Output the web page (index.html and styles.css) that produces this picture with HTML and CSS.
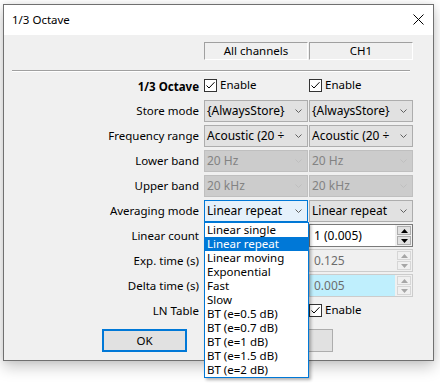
FILE: index.html
```html
<!DOCTYPE html>
<html>
<head>
<meta charset="utf-8">
<title>1/3 Octave</title>
<link rel="stylesheet" href="styles.css">
</head>
<body>
<div class="win">
  <div class="titlebar">
    <span class="title">1/3 Octave</span>
    <svg class="close" width="11" height="11" viewBox="0 0 11 11"><path d="M0.5 0.5L10.5 10.5M10.5 0.5L0.5 10.5" stroke="#000" stroke-width="1"/></svg>
  </div>
  <div class="client">
    <div class="row head">
      <span></span>
      <div class="hcell">All channels</div>
      <div class="hcell">CH1</div>
    </div>
    <div class="sep"></div>

    <div class="row">
      <span class="label bold">1/3 Octave</span>
      <label class="check"><svg class="cb" width="13" height="13" viewBox="0 0 13 13"><rect x="0.5" y="0.5" width="12" height="12" fill="#fff" stroke="#333"/><path d="M2.5 6.5L5 9L10.5 3.2" fill="none" stroke="#000"/></svg>Enable</label>
      <label class="check"><svg class="cb" width="13" height="13" viewBox="0 0 13 13"><rect x="0.5" y="0.5" width="12" height="12" fill="#fff" stroke="#333"/><path d="M2.5 6.5L5 9L10.5 3.2" fill="none" stroke="#000"/></svg>Enable</label>
    </div>

    <div class="row">
      <span class="label">Store mode</span>
      <div class="combo"><span class="ctext">{AlwaysStore}</span><span class="arrow"><svg width="7" height="4" viewBox="0 0 7 4"><path d="M0.5 0.5L3.5 3.5L6.5 0.5" fill="none" stroke="#606060"/></svg></span></div>
      <div class="combo"><span class="ctext">{AlwaysStore}</span><span class="arrow"><svg width="7" height="4" viewBox="0 0 7 4"><path d="M0.5 0.5L3.5 3.5L6.5 0.5" fill="none" stroke="#606060"/></svg></span></div>
    </div>

    <div class="row">
      <span class="label">Frequency range</span>
      <div class="combo"><span class="ctext">Acoustic (20 ÷ 20000 Hz)</span><span class="arrow"><svg width="7" height="4" viewBox="0 0 7 4"><path d="M0.5 0.5L3.5 3.5L6.5 0.5" fill="none" stroke="#606060"/></svg></span></div>
      <div class="combo"><span class="ctext">Acoustic (20 ÷ 20000 Hz)</span><span class="arrow"><svg width="7" height="4" viewBox="0 0 7 4"><path d="M0.5 0.5L3.5 3.5L6.5 0.5" fill="none" stroke="#606060"/></svg></span></div>
    </div>

    <div class="row">
      <span class="label">Lower band</span>
      <div class="combo disabled"><span class="ctext">20 Hz</span><span class="arrow"><svg width="7" height="4" viewBox="0 0 7 4"><path d="M0.5 0.5L3.5 3.5L6.5 0.5" fill="none" stroke="#bfbfbf"/></svg></span></div>
      <div class="combo disabled"><span class="ctext">20 Hz</span><span class="arrow"><svg width="7" height="4" viewBox="0 0 7 4"><path d="M0.5 0.5L3.5 3.5L6.5 0.5" fill="none" stroke="#bfbfbf"/></svg></span></div>
    </div>

    <div class="row">
      <span class="label">Upper band</span>
      <div class="combo disabled"><span class="ctext">20 kHz</span><span class="arrow"><svg width="7" height="4" viewBox="0 0 7 4"><path d="M0.5 0.5L3.5 3.5L6.5 0.5" fill="none" stroke="#bfbfbf"/></svg></span></div>
      <div class="combo disabled"><span class="ctext">20 kHz</span><span class="arrow"><svg width="7" height="4" viewBox="0 0 7 4"><path d="M0.5 0.5L3.5 3.5L6.5 0.5" fill="none" stroke="#bfbfbf"/></svg></span></div>
    </div>

    <div class="row">
      <span class="label">Averaging mode</span>
      <div class="combo active"><span class="ctext">Linear repeat</span><span class="arrow"><svg width="7" height="4" viewBox="0 0 7 4"><path d="M0.5 0.5L3.5 3.5L6.5 0.5" fill="none" stroke="#606060"/></svg></span></div>
      <div class="combo"><span class="ctext">Linear repeat</span><span class="arrow"><svg width="7" height="4" viewBox="0 0 7 4"><path d="M0.5 0.5L3.5 3.5L6.5 0.5" fill="none" stroke="#606060"/></svg></span></div>
    </div>

    <div class="row">
      <span class="label">Linear count</span>
      <div class="spin"><span class="stext">1 (0.005)</span><span class="sbtns"><span class="sbtn"><svg width="7" height="4" viewBox="0 0 7 4"><path d="M0 4H7L3.5 0Z" fill="#000"/></svg></span><span class="sbtn"><svg width="7" height="4" viewBox="0 0 7 4"><path d="M0 0H7L3.5 4Z" fill="#000"/></svg></span></span></div>
      <div class="spin"><span class="stext">1 (0.005)</span><span class="sbtns"><span class="sbtn"><svg width="7" height="4" viewBox="0 0 7 4"><path d="M0 4H7L3.5 0Z" fill="#000"/></svg></span><span class="sbtn"><svg width="7" height="4" viewBox="0 0 7 4"><path d="M0 0H7L3.5 4Z" fill="#000"/></svg></span></span></div>
    </div>

    <div class="row">
      <span class="label">Exp. time (s)</span>
      <div class="spin disabled"><span class="stext">0.125</span><span class="sbtns"><span class="sbtn"><svg width="7" height="4" viewBox="0 0 7 4"><path d="M0 4H7L3.5 0Z" fill="#a6a6a6"/></svg></span><span class="sbtn"><svg width="7" height="4" viewBox="0 0 7 4"><path d="M0 0H7L3.5 4Z" fill="#a6a6a6"/></svg></span></span></div>
      <div class="spin disabled"><span class="stext">0.125</span><span class="sbtns"><span class="sbtn"><svg width="7" height="4" viewBox="0 0 7 4"><path d="M0 4H7L3.5 0Z" fill="#a6a6a6"/></svg></span><span class="sbtn"><svg width="7" height="4" viewBox="0 0 7 4"><path d="M0 0H7L3.5 4Z" fill="#a6a6a6"/></svg></span></span></div>
    </div>

    <div class="row">
      <span class="label">Delta time (s)</span>
      <div class="spin disabled cyan"><span class="stext">0.005</span><span class="sbtns"><span class="sbtn"><svg width="7" height="4" viewBox="0 0 7 4"><path d="M0 4H7L3.5 0Z" fill="#a6a6a6"/></svg></span><span class="sbtn"><svg width="7" height="4" viewBox="0 0 7 4"><path d="M0 0H7L3.5 4Z" fill="#a6a6a6"/></svg></span></span></div>
      <div class="spin disabled cyan"><span class="stext">0.005</span><span class="sbtns"><span class="sbtn"><svg width="7" height="4" viewBox="0 0 7 4"><path d="M0 4H7L3.5 0Z" fill="#a6a6a6"/></svg></span><span class="sbtn"><svg width="7" height="4" viewBox="0 0 7 4"><path d="M0 0H7L3.5 4Z" fill="#a6a6a6"/></svg></span></span></div>
    </div>

    <div class="row">
      <span class="label">LN Table</span>
      <label class="check"><svg class="cb" width="13" height="13" viewBox="0 0 13 13"><rect x="0.5" y="0.5" width="12" height="12" fill="#fff" stroke="#333"/><path d="M2.5 6.5L5 9L10.5 3.2" fill="none" stroke="#000"/></svg>Enable</label>
      <label class="check"><svg class="cb" width="13" height="13" viewBox="0 0 13 13"><rect x="0.5" y="0.5" width="12" height="12" fill="#fff" stroke="#333"/><path d="M2.5 6.5L5 9L10.5 3.2" fill="none" stroke="#000"/></svg>Enable</label>
    </div>

    <div class="buttons">
      <button class="btn default">OK</button>
      <button class="btn">Cancel</button>
    </div>
  </div>
</div>

<ul class="dropdown">
  <li>Linear single</li>
  <li class="sel">Linear repeat</li>
  <li>Linear moving</li>
  <li>Exponential</li>
  <li>Fast</li>
  <li>Slow</li>
  <li>BT (e=0.5 dB)</li>
  <li>BT (e=0.7 dB)</li>
  <li>BT (e=1 dB)</li>
  <li>BT (e=1.5 dB)</li>
  <li>BT (e=2 dB)</li>
</ul>
</body>
</html>
```
FILE: styles.css
```css
html, body {
  margin: 0;
  padding: 0;
  background: #fff;
}
body {
  font-family: "Noto Sans", "Liberation Sans", sans-serif;
  font-size: 11.5px;
  color: #000;
  padding: 4px 0 0 3px;
  height: 384px;
  overflow: hidden;
}

.win {
  width: 429px;
  height: 355px;
  border: 1px solid #707070;
  background: #f0f0f0;
  box-shadow: 0 6px 14px rgba(0, 0, 0, 0.22), 0 0 6px rgba(0, 0, 0, 0.08);
  display: flex;
  flex-direction: column;
}

.titlebar {
  height: 30px;
  background: #fff;
  display: flex;
  align-items: center;
  justify-content: space-between;
  padding: 0 9px 0 8px;
  flex: none;
}
.title {
  font-size: 11.5px;
  line-height: 16px;
  margin-top: -1px;
}
.close {
  display: block;
  margin-top: -1px;
}

.client {
  flex: 1;
  display: flex;
  flex-direction: column;
}

.row {
  display: grid;
  grid-template-columns: 200px 105px 104px;
  height: 25px;
  align-items: center;
  flex: none;
}

.head {
  margin-top: 7px;
  height: 18px;
  align-items: stretch;
}
.hcell {
  border-top: 1px solid #a0a0a0;
  border-left: 1px solid #a0a0a0;
  border-right: 1px solid #fff;
  border-bottom: 1px solid #fff;
  text-align: center;
  line-height: 15px;
  width: 104px;
  box-sizing: border-box;
}

.sep {
  margin: 10px 0 1px 8px;
  width: 398px;
  border-top: 1px solid #a0a0a0;
  border-bottom: 1px solid #fff;
  flex: none;
}

.label {
  text-align: right;
  padding-right: 5px;
  white-space: nowrap;
  line-height: 16px;
}
.label.bold {
  font-weight: bold;
  margin-top: 2px;
}

.check {
  display: flex;
  align-items: center;
  gap: 3px;
  line-height: 16px;
  margin-top: -1px;
}
.cb {
  display: block;
  flex: none;
}

.combo {
  width: 104px;
  height: 22px;
  box-sizing: border-box;
  border: 1px solid #adadad;
  background: #e1e1e1;
  display: flex;
  align-items: center;
}
.combo.disabled {
  background: #cccccc;
  border-color: #bfbfbf;
  color: #838383;
}
.combo.active {
  background: #e5f1fb;
  border-color: #0078d7;
}
.ctext {
  flex: 1;
  padding-left: 2px;
  margin-right: 4px;
  white-space: nowrap;
  overflow: hidden;
  line-height: 16px;
  font-size: 12px;
}
.arrow {
  width: 15px;
  flex: none;
  display: flex;
  justify-content: center;
  padding-right: 1px;
}
.arrow svg {
  display: block;
}

.spin {
  width: 104px;
  height: 23px;
  box-sizing: border-box;
  border: 1px solid #7a7a7a;
  display: flex;
  background: #f0f0f0;
}
.spin.disabled {
  border-color: #cccccc;
}
.stext {
  flex: 1;
  background: #fff;
  padding-left: 4px;
  line-height: 21px;
  font-size: 12px;
}
.spin.disabled .stext {
  background: #f0f0f0;
  color: #6d6d6d;
}
.spin.cyan .stext {
  background: #bfeffd;
}
.sbtns {
  width: 17px;
  flex: none;
  display: flex;
  flex-direction: column;
  justify-content: center;
  gap: 1px;
  padding: 0 1px 0 2px;
  box-sizing: border-box;
}
.sbtn {
  height: 9px;
  box-sizing: border-box;
  border: 1px solid #adadad;
  background: #e1e1e1;
  display: flex;
  align-items: center;
  justify-content: center;
}
.spin.disabled .sbtn {
  border-color: #d6d6d6;
  background: #f0f0f0;
}
.sbtn svg {
  display: block;
}

.buttons {
  display: flex;
  margin-top: 6px;
  padding-left: 98px;
  gap: 61px;
  flex: none;
}
.btn {
  width: 85px;
  height: 23px;
  box-sizing: border-box;
  border: 1px solid #adadad;
  background: #e1e1e1;
  font-family: inherit;
  font-size: 11.5px;
  color: #000;
  padding: 0;
}
.btn.default {
  border: 2px solid #0078d7;
}

.dropdown {
  position: absolute;
  left: 204px;
  top: 222px;
  width: 105px;
  height: 156px;
  box-sizing: border-box;
  margin: 0;
  padding: 0;
  list-style: none;
  background: #fff;
  border: 1px solid #0078d7;
  box-shadow: 2px 2px 3px rgba(0, 0, 0, 0.3);
}
.dropdown li {
  height: 14px;
  line-height: 14px;
  padding-left: 2px;
  white-space: nowrap;
  overflow: hidden;
  font-size: 11.5px;
}
.dropdown li.sel {
  background: #0078d7;
  color: #fff;
}
```
